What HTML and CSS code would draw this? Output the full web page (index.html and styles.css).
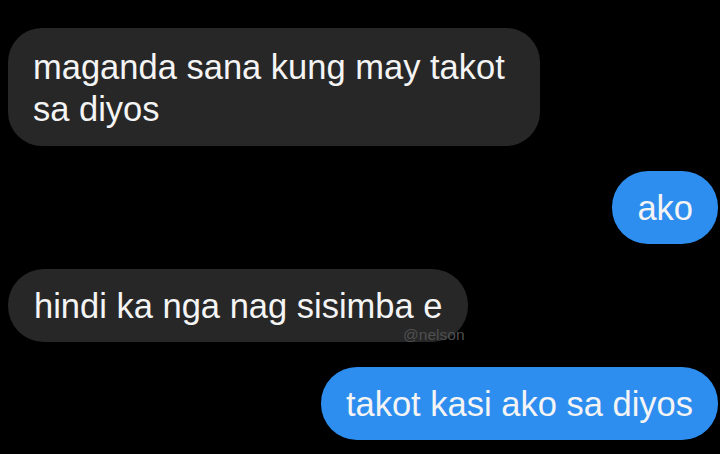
FILE: index.html
```html
<!DOCTYPE html>
<html>
<head>
<meta charset="utf-8">
<link rel="stylesheet" href="styles.css">
</head>
<body>
<div class="chat">
  <div class="bubble in wide">maganda sana kung may takot sa diyos</div>
  <div class="bubble out short">ako</div>
  <div class="bubble in mark-host">hindi ka nga nag sisimba e<span class="mark">@nelson</span></div>
  <div class="bubble out">takot kasi ako sa diyos</div>
</div>
</body>
</html>
```
FILE: styles.css
```css
html, body {
  margin: 0;
  background: #000;
}
body {
  width: 720px;
  height: 454px;
  overflow: hidden;
}
.chat {
  display: flex;
  flex-direction: column;
  padding: 28px 2px 0 8px;
  gap: 25px;
  font-family: "Liberation Sans", Arial, sans-serif;
}
.bubble {
  font-size: 34.5px;
  line-height: 42px;
  color: #f4f4f4;
  padding: 16px 25px 15px 25px;
  border-radius: 36px;
  box-sizing: border-box;
}
.in {
  align-self: flex-start;
  background: #272727;
}
.out {
  align-self: flex-end;
  background: #2d8ef0;
}
.wide {
  width: 532px;
  padding: 18px 25px 16px 25px;
  border-radius: 34px;
}
.short {
  padding-left: 25px;
  padding-right: 25px;
}
.mark-host {
  position: relative;
  padding-left: 26px;
}
.mark {
  position: absolute;
  right: 3px;
  top: 58px;
  font-size: 15.5px;
  line-height: 16px;
  color: #505050;
}
```
